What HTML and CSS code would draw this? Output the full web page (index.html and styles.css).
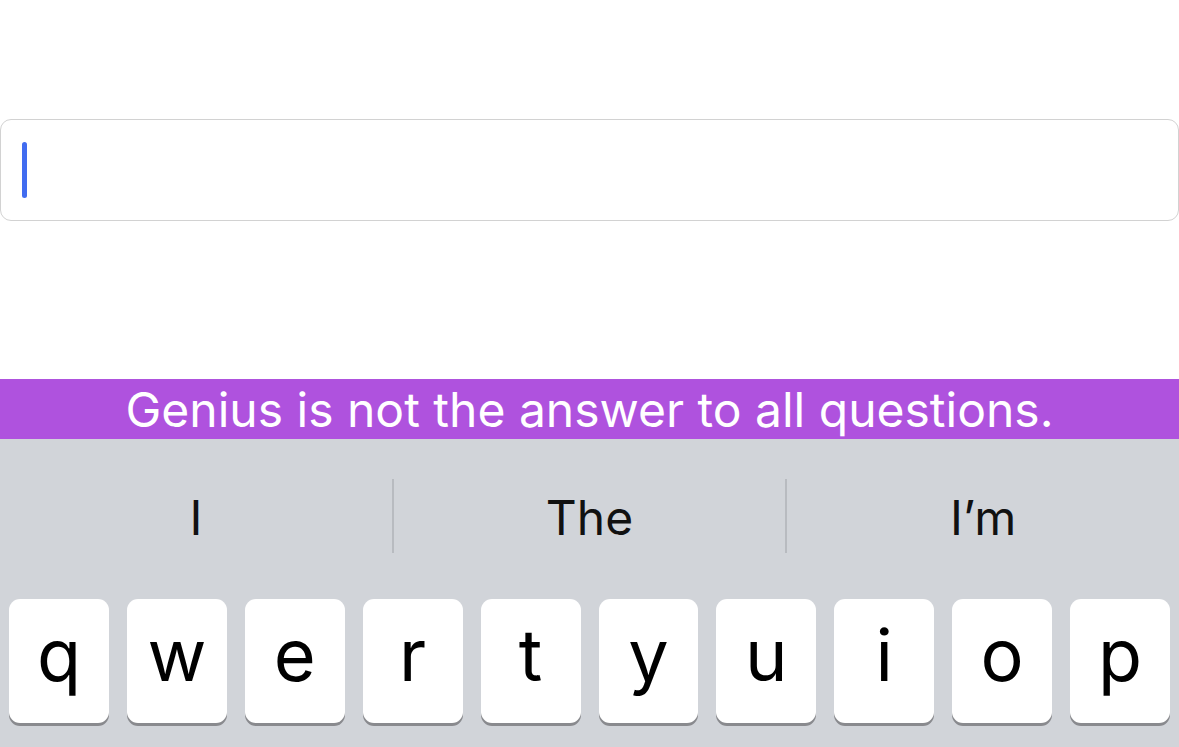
FILE: index.html
```html
<!DOCTYPE html>
<html>
<head>
<meta charset="utf-8">
<link rel="stylesheet" href="styles.css">
</head>
<body>
<div class="screen">
  <div class="top">
    <div class="field"><span class="caret"></span></div>
  </div>
  <div class="banner">Genius is not the answer to all questions.</div>
  <div class="keyboard">
    <div class="suggestions">
      <div class="sugg">I</div>
      <div class="sep"></div>
      <div class="sugg">The</div>
      <div class="sep"></div>
      <div class="sugg">I’m</div>
    </div>
    <div class="row">
      <div class="key">q</div>
      <div class="key">w</div>
      <div class="key">e</div>
      <div class="key">r</div>
      <div class="key">t</div>
      <div class="key">y</div>
      <div class="key">u</div>
      <div class="key">i</div>
      <div class="key">o</div>
      <div class="key">p</div>
    </div>
  </div>
</div>
</body>
</html>
```
FILE: styles.css
```css
* { box-sizing: border-box; }
html, body { margin: 0; padding: 0; }
body {
  width: 1179px;
  height: 747px;
  overflow: hidden;
  background: #ffffff;
  font-family: "Inter", "Liberation Sans", sans-serif;
}
.screen { display: flex; flex-direction: column; height: 747px; }
.top { height: 379px; padding-top: 119px; }
.field {
  height: 102px;
  border: 1px solid #d2d2d2;
  border-radius: 11px;
  padding: 22px 0 0 21px;
}
.caret {
  display: block;
  width: 5px;
  height: 56px;
  border-radius: 3px;
  background: #416cf0;
}
.banner {
  height: 60px;
  background: #af52de;
  color: #ffffff;
  font-size: 48px;
  line-height: 62px;
  text-align: center;
  white-space: nowrap;
}
.keyboard {
  flex: 1;
  background: #d1d4d9;
  display: flex;
  flex-direction: column;
}
.suggestions {
  height: 154px;
  display: flex;
  align-items: flex-start;
  padding-top: 40px;
}
.sugg {
  flex: 1;
  height: 74px;
  text-align: center;
  font-size: 48px;
  line-height: 78px;
  color: #111111;
}
.sep {
  width: 2px;
  height: 74px;
  background: #b8bbc0;
}
.row {
  display: flex;
  gap: 18px;
  padding: 6px 9px 0 9px;
}
.key {
  flex: 1;
  height: 124px;
  background: #ffffff;
  border-radius: 11px;
  box-shadow: 0 3px 0 #898a8e;
  text-align: center;
  font-size: 72px;
  line-height: 112px;
  color: #000000;
}
```
